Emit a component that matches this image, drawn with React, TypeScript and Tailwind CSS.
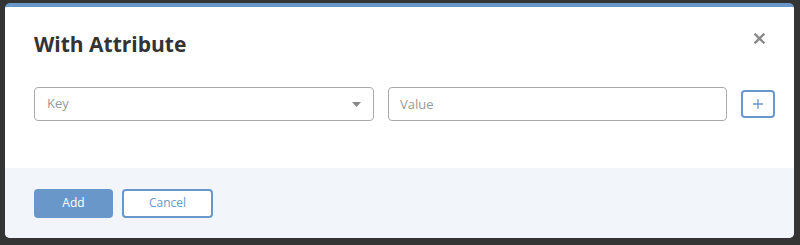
import { useState } from "react";

const font = { fontFamily: '"Open Sans", "Liberation Sans", sans-serif' };

const CloseIcon = () => (
    <svg width="11" height="11" viewBox="0 0 11 11" className="mt-[3px]">
        <path d="M1.5 1.5 L9.5 9.5 M9.5 1.5 L1.5 9.5" stroke="#8a8a8a" strokeWidth="2.4" strokeLinecap="square" />
    </svg>
);

const App = () => {
    const [value, setValue] = useState("");

    return (
        <div className="w-[800px] h-[245px] bg-[#343434] pt-[3px] pl-[5px] pr-[6px]" style={font}>
            <div className="h-[235px] flex flex-col bg-white border-t-4 border-[#6a97ca] rounded-[5px] overflow-hidden">
                {/* body */}
                <div className="flex-1 bg-white pl-[29px] pr-[19px] pt-[22px]">
                    <div className="flex justify-between items-start pr-[10px]">
                        <h2 className="text-[21px] leading-[30px] font-bold text-[#333]">With Attribute</h2>
                        <button className="mt-[1px]">
                            <CloseIcon />
                        </button>
                    </div>

                    <div className="flex items-center mt-[28px] gap-[14px]">
                        <div className="relative w-[340px] h-[34px] shrink-0 border border-[#a9a9a9] rounded-[4px] flex items-center px-[12px]">
                            <span className="text-[13px] text-[#999]">Key</span>
                            <svg width="9" height="5" viewBox="0 0 9 5" className="absolute right-[12px] top-[14px]">
                                <path d="M0 0 H9 L4.5 5 Z" fill="#888" />
                            </svg>
                        </div>
                        <input
                            value={value}
                            onChange={(e) => setValue(e.target.value)}
                            placeholder="Value"
                            className="w-[339px] h-[34px] shrink-0 border border-[#a9a9a9] rounded-[4px] px-[11px] text-[13px] text-[#333] placeholder:text-[#999] outline-none"
                        />
                        <button className="w-[34px] h-[28px] shrink-0 border-2 border-[#6a97ca] rounded-[4px] flex items-center justify-center">
                            <svg width="10" height="10" viewBox="0 0 10 10">
                                <path d="M5 0 V10 M0 5 H10" stroke="#6a97ca" strokeWidth="1.3" />
                            </svg>
                        </button>
                    </div>
                </div>

                {/* footer */}
                <div className="h-[70px] bg-[#f2f5fa] px-[29px] flex items-center gap-[9px]">
                    <button className="w-[79px] h-[29px] rounded-[4px] bg-[#6a97ca] text-white text-[12px]">
                        Add
                    </button>
                    <button className="w-[91px] h-[29px] rounded-[4px] bg-white border-2 border-[#6a97ca] text-[#6a97ca] text-[12px]">
                        Cancel
                    </button>
                </div>
            </div>
        </div>
    );
};

export default App;
